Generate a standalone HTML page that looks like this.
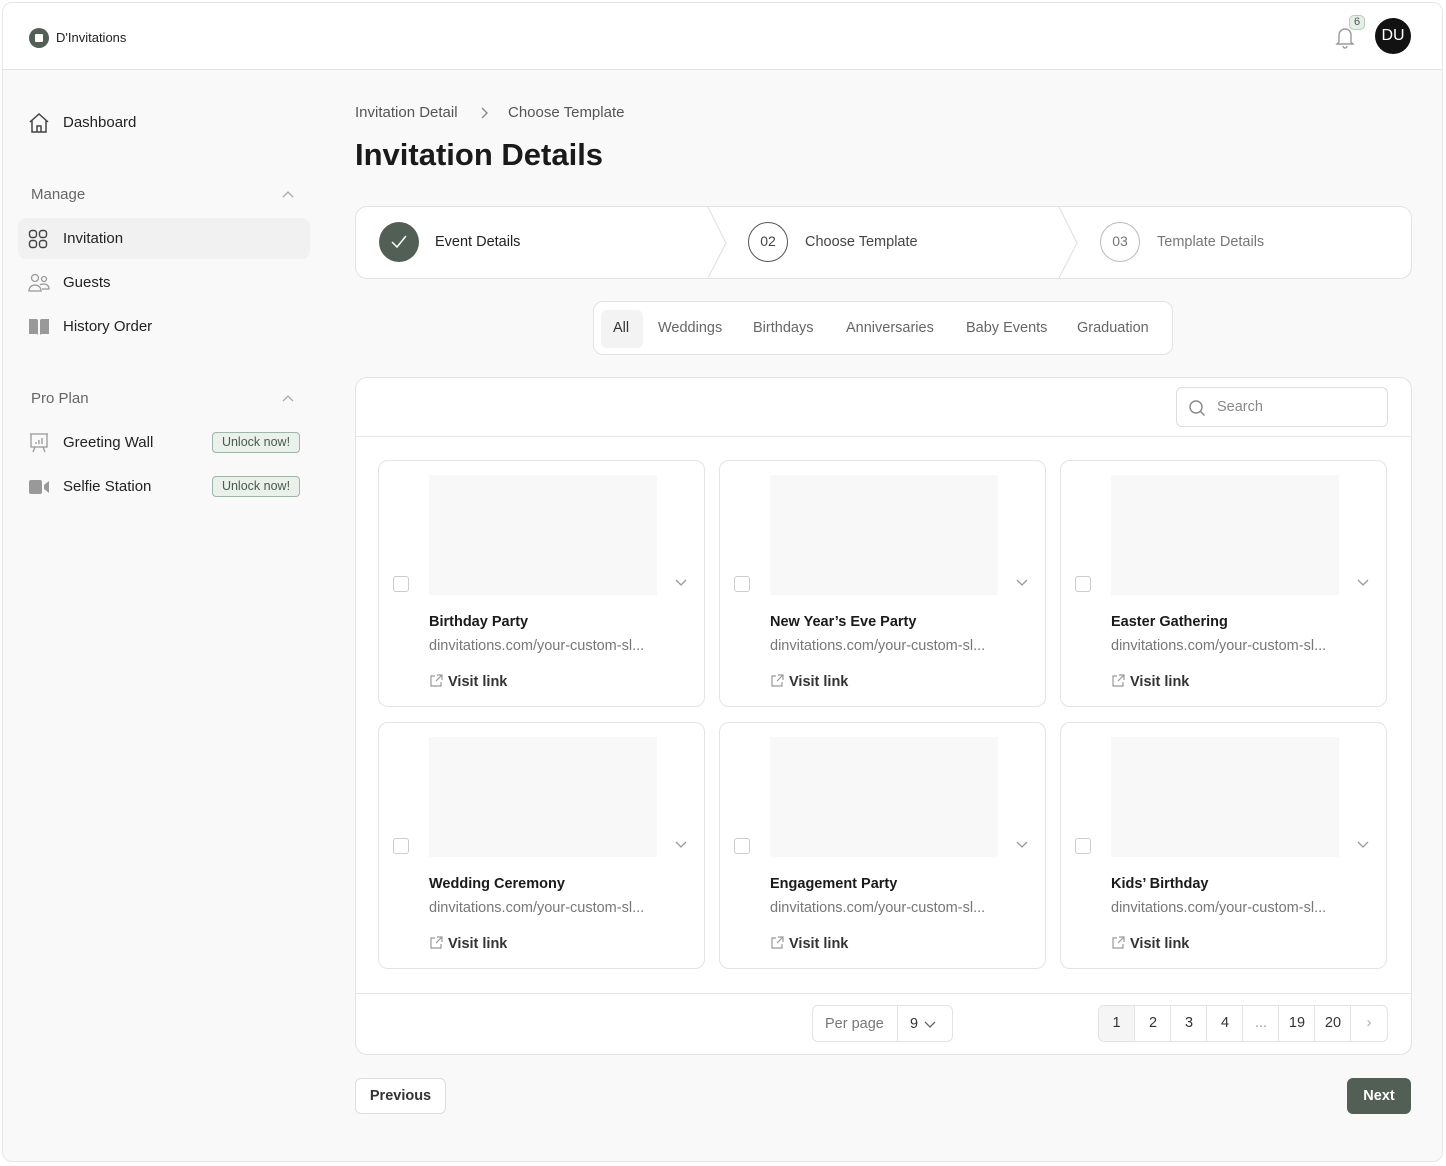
<!DOCTYPE html>
<html><head><meta charset="utf-8"><style>
*{box-sizing:border-box;margin:0;padding:0}
body{width:1446px;height:1166px;background:#fff;font-family:"Liberation Sans",Arial,sans-serif;color:#1f1f1f;position:relative;overflow:hidden}
.frame{position:absolute;left:2px;top:2px;width:1441px;height:1160px;border:1px solid #e6e6e6;border-radius:10px;background:#f9f9f9;overflow:hidden}
.hdr{position:absolute;left:0;top:0;right:0;height:67px;background:#fff;border-bottom:1px solid #e3e3e3}
.abs{position:absolute}
.nav{position:absolute;left:60px;font-size:15px;color:#222}
.sec{position:absolute;left:28px;font-size:15px;color:#666}
.ico{position:absolute;left:25px}
.unlock{position:absolute;left:209px;width:88px;height:21px;border:1px solid #9fb5a5;background:#e9f1ea;border-radius:4px;font-size:12.5px;color:#4a5a4d;text-align:center;line-height:19px}
.card{position:absolute;width:327px;height:247px;background:#fff;border:1px solid #e3e3e3;border-radius:10px}
.card .img{position:absolute;left:50px;top:14px;width:228px;height:120px;background:#f8f8f8}
.card .cb{position:absolute;left:14px;top:115px;width:16px;height:16px;border:1px solid #ccc;border-radius:3px}
.card .chev{position:absolute;left:296px;top:118px}
.card .t{position:absolute;left:50px;top:153px;font-weight:bold;font-size:14.5px;color:#1a1a1a}
.card .u{position:absolute;left:50px;top:177px;font-size:14.5px;color:#777}
.card .v{position:absolute;left:50px;top:213px;font-size:14.5px;font-weight:bold;color:#333}
.card .v svg{vertical-align:-2px;margin-right:5px}
.pg{position:absolute;top:1005px;height:37px;width:37px;border-left:1px solid #e3e3e3;text-align:center;line-height:37px;font-size:14.5px;color:#333}
</style></head><body>
<div class="frame">
<div class="hdr">
 <div class="abs" style="left:26px;top:25px;width:20px;height:20px;border-radius:50%;background:#525f55"><div style="position:absolute;left:6px;top:6px;width:8px;height:8px;background:#fff;border-radius:1px"></div></div>
 <div class="abs" style="left:53px;top:27px;font-size:13px;color:#222">D'Invitations</div>
 <svg class="abs" style="left:1331px;top:22px" width="22" height="24" viewBox="0 0 22 24" fill="none" stroke="#999" stroke-width="1.4"><path d="M5 17V10a6 6 0 0 1 12 0v7l2 2H3z"/><path d="M9 21a2 2 0 0 0 4 0"/></svg>
 <div class="abs" style="left:1346px;top:12px;width:16px;height:15px;background:#e4efe6;border:1px solid #b9cdbc;border-radius:5px;font-size:11px;text-align:center;line-height:13px;color:#555">6</div>
 <div class="abs" style="left:1372px;top:15px;width:36px;height:36px;border-radius:50%;background:#121212;color:#fff;font-size:16px;text-align:center;line-height:36px">DU</div>
</div>
<!-- sidebar -->
<svg class="ico" style="top:109px" width="22" height="22" viewBox="0 0 22 22" fill="none" stroke="#444" stroke-width="1.5"><path d="M2 10L11 2l9 8M4 8v12h14V8M9 20v-6h4v6"/></svg>
<div class="nav" style="top:111px">Dashboard</div>
<div class="sec" style="top:183px">Manage</div>
<svg class="abs" style="left:279px;top:187px" width="12" height="8" fill="none" stroke="#aaa" stroke-width="1.3"><path d="M1 7l5-5 5 5"/></svg>
<div class="abs" style="left:15px;top:215px;width:292px;height:41px;background:#f1f1f1;border-radius:8px"></div>
<svg class="ico" style="top:226px" width="20" height="20" viewBox="0 0 20 20" fill="none" stroke="#444" stroke-width="1.4"><rect x="1.5" y="1.5" width="7" height="7" rx="2.5"/><rect x="11.5" y="1.5" width="7" height="7" rx="2.5"/><rect x="1.5" y="11.5" width="7" height="7" rx="2.5"/><rect x="11.5" y="11.5" width="7" height="7" rx="2.5"/></svg>
<div class="nav" style="top:227px">Invitation</div>
<svg class="ico" style="top:270px" width="22" height="20" viewBox="0 0 22 20" fill="none" stroke="#999" stroke-width="1.3"><circle cx="7" cy="5" r="3.5"/><circle cx="16" cy="6" r="2.5"/><path d="M1 18c0-4 3-6 6-6s6 2 6 6zM12 12c1-1 3-1 4-1 3 0 5 2 5 5h-7"/></svg>
<div class="nav" style="top:271px">Guests</div>
<svg class="ico" style="top:315px" width="22" height="18" viewBox="0 0 22 18"><path d="M1 1h8l1 1v15l-1-1H1z M21 1h-8l-1 1v15l1-1h8z" fill="#999"/></svg>
<div class="nav" style="top:315px">History Order</div>
<div class="sec" style="top:387px">Pro Plan</div>
<svg class="abs" style="left:279px;top:391px" width="12" height="8" fill="none" stroke="#aaa" stroke-width="1.3"><path d="M1 7l5-5 5 5"/></svg>
<svg class="ico" style="top:429px" width="22" height="22" viewBox="0 0 22 22" fill="none" stroke="#999" stroke-width="1.3"><path d="M2 2h18M3 2v13h16V2M7 15l-2 5M15 15l2 5M8 12v-2M11 12V8M14 12V6"/></svg>
<div class="nav" style="top:431px">Greeting Wall</div>
<div class="unlock" style="top:429px">Unlock now!</div>
<svg class="ico" style="top:475px" width="22" height="18" viewBox="0 0 22 18"><rect x="1" y="2" width="13" height="14" rx="2" fill="#999"/><path d="M16 7l5-4v12l-5-4z" fill="#999"/></svg>
<div class="nav" style="top:475px">Selfie Station</div>
<div class="unlock" style="top:473px">Unlock now!</div>
<!-- main -->
<div class="abs" style="left:352px;top:101px;font-size:15px;color:#555">Invitation Detail</div>
<svg class="abs" style="left:477px;top:104px" width="8" height="12" fill="none" stroke="#888" stroke-width="1.4"><path d="M2 1l5 5-5 5"/></svg>
<div class="abs" style="left:505px;top:101px;font-size:15px;color:#555">Choose Template</div>
<div class="abs" style="left:352px;top:134px;font-size:31px;font-weight:bold;color:#1a1a1a">Invitation Details</div>
<div class="abs" style="left:352px;top:203px;width:1057px;height:73px;background:#fff;border:1px solid #e3e3e3;border-radius:12px"></div>
<svg class="abs" style="left:700px;top:204px" width="380" height="72" fill="none" stroke="#e3e3e3" stroke-width="1.2"><path d="M5 0l18 36L5 71M356 0l18 36-18 35"/></svg>
<div class="abs" style="left:376px;top:219px;width:40px;height:40px;border-radius:50%;background:#525f55"></div>
<svg class="abs" style="left:386px;top:229px" width="20" height="20" fill="none" stroke="#fff" stroke-width="1.5"><path d="M3 10l5 5 9-11"/></svg>
<div class="abs" style="left:432px;top:231px;font-size:14.5px;color:#222">Event Details</div>
<div class="abs" style="left:745px;top:219px;width:40px;height:40px;border-radius:50%;border:1.5px solid #555;text-align:center;line-height:37px;font-size:14px;color:#444">02</div>
<div class="abs" style="left:802px;top:231px;font-size:14.5px;color:#444">Choose Template</div>
<div class="abs" style="left:1097px;top:219px;width:40px;height:40px;border-radius:50%;border:1.5px solid #bbb;text-align:center;line-height:37px;font-size:14px;color:#777">03</div>
<div class="abs" style="left:1154px;top:231px;font-size:14.5px;color:#777">Template Details</div>
<div class="abs" style="left:590px;top:298px;width:580px;height:54px;background:#fff;border:1px solid #e3e3e3;border-radius:10px"></div>
<div class="abs" style="left:598px;top:307px;width:42px;height:38px;background:#f3f3f3;border-radius:6px"></div>
<div class="abs" style="top:317px;left:610px;font-size:14.5px;color:#333">All</div>
<div class="abs" style="top:317px;left:655px;font-size:14.5px;color:#666">Weddings</div>
<div class="abs" style="top:317px;left:750px;font-size:14.5px;color:#666">Birthdays</div>
<div class="abs" style="top:317px;left:843px;font-size:14.5px;color:#666">Anniversaries</div>
<div class="abs" style="top:317px;left:963px;font-size:14.5px;color:#666">Baby Events</div>
<div class="abs" style="top:317px;left:1074px;font-size:14.5px;color:#666">Graduation</div>
<div class="abs" style="left:352px;top:374px;width:1057px;height:678px;background:#fff;border:1px solid #e3e3e3;border-radius:12px"></div>
<div class="abs" style="left:353px;top:433px;width:1055px;height:1px;background:#e6e6e6"></div>
<div class="abs" style="left:353px;top:990px;width:1055px;height:1px;background:#e6e6e6"></div>
<div class="abs" style="left:1173px;top:384px;width:212px;height:40px;border:1px solid #ddd;border-radius:6px"></div>
<svg class="abs" style="left:1185px;top:396px" width="18" height="18" fill="none" stroke="#888" stroke-width="1.4"><circle cx="8" cy="8" r="6"/><path d="M12.5 12.5l4 4"/></svg>
<div class="abs" style="left:1214px;top:396px;font-size:14.5px;color:#888">Search</div>

<div class="card" style="left:375px;top:457px"><div class="img"></div><div class="cb"></div><svg class="chev" width="12" height="8" fill="none" stroke="#999" stroke-width="1.3"><path d="M1 1l5 5 5-5"/></svg><div class="t">Birthday Party</div><div class="u">dinvitations.com/your-custom-sl...</div><div class="v"><svg width="14" height="14" fill="none" stroke="#999" stroke-width="1.2"><path d="M6 2H2v10h10V8M8 1h5v5M13 1L7 7"/></svg>Visit link</div></div>
<div class="card" style="left:716px;top:457px"><div class="img"></div><div class="cb"></div><svg class="chev" width="12" height="8" fill="none" stroke="#999" stroke-width="1.3"><path d="M1 1l5 5 5-5"/></svg><div class="t">New Year’s Eve Party</div><div class="u">dinvitations.com/your-custom-sl...</div><div class="v"><svg width="14" height="14" fill="none" stroke="#999" stroke-width="1.2"><path d="M6 2H2v10h10V8M8 1h5v5M13 1L7 7"/></svg>Visit link</div></div>
<div class="card" style="left:1057px;top:457px"><div class="img"></div><div class="cb"></div><svg class="chev" width="12" height="8" fill="none" stroke="#999" stroke-width="1.3"><path d="M1 1l5 5 5-5"/></svg><div class="t">Easter Gathering</div><div class="u">dinvitations.com/your-custom-sl...</div><div class="v"><svg width="14" height="14" fill="none" stroke="#999" stroke-width="1.2"><path d="M6 2H2v10h10V8M8 1h5v5M13 1L7 7"/></svg>Visit link</div></div>
<div class="card" style="left:375px;top:719px"><div class="img"></div><div class="cb"></div><svg class="chev" width="12" height="8" fill="none" stroke="#999" stroke-width="1.3"><path d="M1 1l5 5 5-5"/></svg><div class="t">Wedding Ceremony</div><div class="u">dinvitations.com/your-custom-sl...</div><div class="v"><svg width="14" height="14" fill="none" stroke="#999" stroke-width="1.2"><path d="M6 2H2v10h10V8M8 1h5v5M13 1L7 7"/></svg>Visit link</div></div>
<div class="card" style="left:716px;top:719px"><div class="img"></div><div class="cb"></div><svg class="chev" width="12" height="8" fill="none" stroke="#999" stroke-width="1.3"><path d="M1 1l5 5 5-5"/></svg><div class="t">Engagement Party</div><div class="u">dinvitations.com/your-custom-sl...</div><div class="v"><svg width="14" height="14" fill="none" stroke="#999" stroke-width="1.2"><path d="M6 2H2v10h10V8M8 1h5v5M13 1L7 7"/></svg>Visit link</div></div>
<div class="card" style="left:1057px;top:719px"><div class="img"></div><div class="cb"></div><svg class="chev" width="12" height="8" fill="none" stroke="#999" stroke-width="1.3"><path d="M1 1l5 5 5-5"/></svg><div class="t">Kids’ Birthday</div><div class="u">dinvitations.com/your-custom-sl...</div><div class="v"><svg width="14" height="14" fill="none" stroke="#999" stroke-width="1.2"><path d="M6 2H2v10h10V8M8 1h5v5M13 1L7 7"/></svg>Visit link</div></div>

<div class="abs" style="left:809px;top:1002px;width:141px;height:37px;border:1px solid #e3e3e3;border-radius:6px"></div>
<div class="abs" style="left:894px;top:1003px;width:1px;height:35px;background:#e3e3e3"></div>
<div class="abs" style="left:822px;top:1013px;font-size:14.5px;color:#777">Per page</div>
<div class="abs" style="left:907px;top:1013px;font-size:14.5px;color:#333">9</div>
<svg class="abs" style="left:921px;top:1018px" width="12" height="8" fill="none" stroke="#666" stroke-width="1.3"><path d="M1 1l5 5 5-5"/></svg>
<div class="abs" style="left:1095px;top:1002px;width:290px;height:37px;border:1px solid #e3e3e3;border-radius:6px;overflow:hidden;background:#fff">
<div class="abs" style="left:0;top:0;width:36px;height:37px;background:#f5f5f5"></div></div>
<div class="pg" style="left:1095px;top:1003px;border-left:none;height:35px;line-height:35px">1</div>
<div class="pg" style="left:1131px;top:1003px;height:35px;line-height:35px">2</div>
<div class="pg" style="left:1167px;top:1003px;height:35px;line-height:35px">3</div>
<div class="pg" style="left:1203px;top:1003px;height:35px;line-height:35px">4</div>
<div class="pg" style="left:1239px;top:1003px;height:35px;line-height:35px;color:#999">...</div>
<div class="pg" style="left:1275px;top:1003px;height:35px;line-height:35px">19</div>
<div class="pg" style="left:1311px;top:1003px;height:35px;line-height:35px">20</div>
<div class="pg" style="left:1347px;top:1003px;height:35px;line-height:35px;color:#aaa">›</div>
<div class="abs" style="left:352px;top:1075px;width:91px;height:36px;background:#fff;border:1px solid #ddd;border-radius:6px;text-align:center;line-height:34px;font-size:14.5px;font-weight:bold;color:#333">Previous</div>
<div class="abs" style="left:1344px;top:1075px;width:64px;height:36px;background:#525f55;border-radius:6px;text-align:center;line-height:36px;font-size:14.5px;font-weight:bold;color:#fff">Next</div>
</div>
</body></html>
